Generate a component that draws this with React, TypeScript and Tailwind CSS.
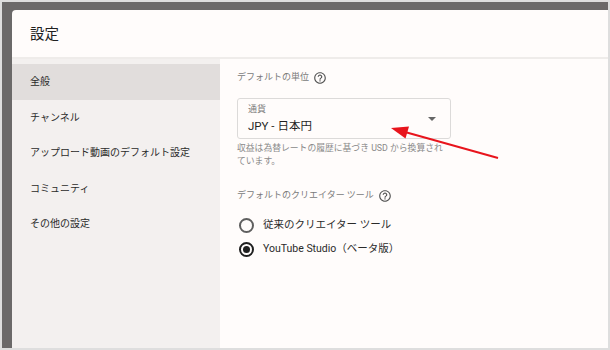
import { MdHelpOutline } from "react-icons/md";

const menuItems = [
  "全般",
  "チャンネル",
  "アップロード動画のデフォルト設定",
  "コミュニティ",
  "その他の設定",
];

function Radio({ checked, label }: { checked: boolean; label: string }) {
  return (
    <div className="flex h-[18px] items-center gap-[9px]">
      <div
        className={
          checked
            ? "flex h-[15px] w-[15px] items-center justify-center rounded-full border-2 border-[#1f1f1f]"
            : "h-[15px] w-[15px] rounded-full border-2 border-[#5f5f5f]"
        }
      >
        {checked && <div className="h-[7px] w-[7px] rounded-full bg-[#1f1f1f]" />}
      </div>
      <span className="text-[10.5px] text-[#2a2a2a]">{label}</span>
    </div>
  );
}

export default function App() {
  return (
    <div className="relative h-[350px] w-[610px] overflow-hidden border-2 border-[#dedede] bg-[#6b6969] font-['Roboto','Noto_Sans_CJK_JP',sans-serif]">
      <div className="flex h-full flex-col pl-[10px] pt-[8px]">
        <div className="flex flex-1 flex-col overflow-hidden rounded-tl-[4px] bg-[#fffcfb]">
          <header className="flex h-[49px] shrink-0 items-center border-b-2 border-[#efecea] pl-[18px] pt-[3px] text-[14.5px] text-[#202020]">
            設定
          </header>

          <div className="flex flex-1">
            <aside className="w-[208px] bg-[#f3f0ef] pt-[5px]">
              {menuItems.map((item, i) => (
                <div
                  key={item}
                  className={
                    i === 0
                      ? "flex h-[35.5px] items-center bg-[#e1dddc] pl-[18px] text-[10px] text-[#2a2a2a]"
                      : "flex h-[35.5px] items-center pl-[18px] text-[10px] text-[#2a2a2a]"
                  }
                >
                  {item}
                </div>
              ))}
            </aside>

            <section className="flex-1 pl-[17px] pt-[12px]">
              <div className="flex h-[14px] items-center gap-[4px] text-[9px] text-[#7a7a7a]">
                デフォルトの単位
                <MdHelpOutline className="h-[14px] w-[14px] text-[#555]" />
              </div>

              <div className="mt-[13px] flex h-[41px] w-[214px] items-center justify-between rounded-[3px] border border-[#dcdad9] pl-[10px] pr-[14px]">
                <div className="flex flex-col">
                  <span className="text-[9px] leading-[12px] text-[#808080]">通貨</span>
                  <span className="mt-[3px] text-[11.5px] leading-[16px] text-[#1f1f1f]">JPY - 日本円</span>
                </div>
                <div className="h-0 w-0 border-x-[4px] border-t-[4px] border-x-transparent border-t-[#666]" />
              </div>

              <p className="mt-[3px] text-[8.8px] leading-[13px] text-[#8a8a8a]">
                収益は為替レートの履歴に基づき USD から換算され
                <br />
                ています。
              </p>

              <div className="mt-[21px] flex h-[14px] items-center gap-[4px] text-[9px] text-[#7a7a7a]">
                デフォルトのクリエイター ツール
                <MdHelpOutline className="h-[14px] w-[14px] text-[#555]" />
              </div>

              <div className="ml-[2px] mt-[13px] flex flex-col gap-[6px]">
                <Radio checked={false} label="従来のクリエイター ツール" />
                <Radio checked label="YouTube Studio（ベータ版）" />
              </div>
            </section>
          </div>
        </div>
      </div>

      {/* annotation arrow */}
      <svg
        className="pointer-events-none absolute left-[-2px] top-[-2px]"
        width="610"
        height="350"
        viewBox="0 0 610 350"
      >
        <line x1="498" y1="158" x2="405" y2="132" stroke="#e8141c" strokeWidth="2" />
        <polygon points="391,128 409,126.5 405.5,138.5" fill="#e8141c" />
      </svg>
    </div>
  );
}
